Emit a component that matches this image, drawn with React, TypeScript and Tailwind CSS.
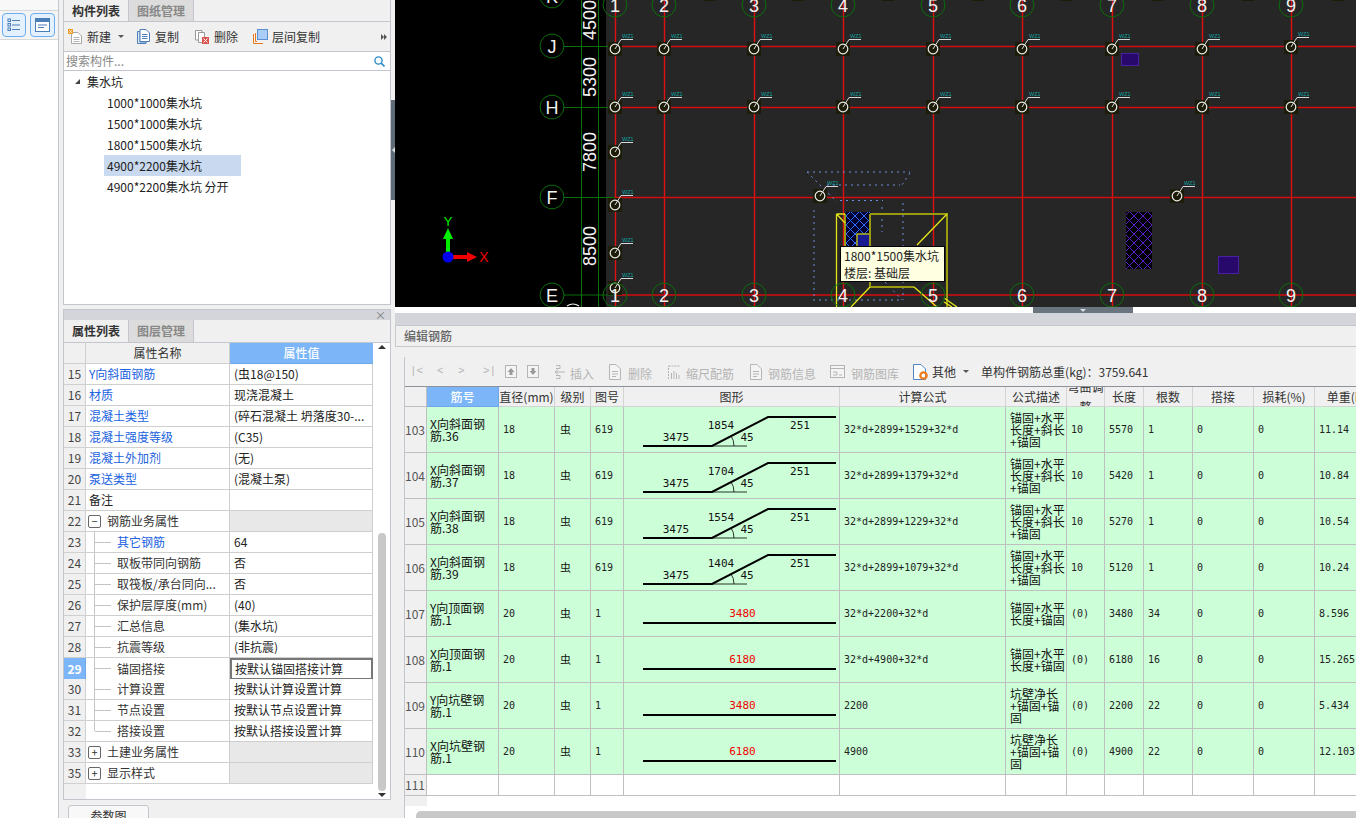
const attrRows = [
  { no: '15', name: 'Y向斜面钢筋', value: '(虫18@150)', blue: true },
  { no: '16', name: '材质', value: '现浇混凝土', blue: true },
  { no: '17', name: '混凝土类型', value: '(碎石混凝土 坍落度30-...', blue: true },
  { no: '18', name: '混凝土强度等级', value: '(C35)', blue: true },
  { no: '19', name: '混凝土外加剂', value: '(无)', blue: true },
  { no: '20', name: '泵送类型', value: '(混凝土泵)', blue: true },
  { no: '21', name: '备注', value: '' },
  { no: '22', name: '钢筋业务属性', value: '', group: '-' },
  { no: '23', name: '其它钢筋', value: '64', child: true, blue: true },
  { no: '24', name: '取板带同向钢筋', value: '否', child: true },
  { no: '25', name: '取筏板/承台同向...', value: '否', child: true },
  { no: '26', name: '保护层厚度(mm)', value: '(40)', child: true },
  { no: '27', name: '汇总信息', value: '(集水坑)', child: true },
  { no: '28', name: '抗震等级', value: '(非抗震)', child: true },
  { no: '29', name: '锚固搭接', value: '按默认锚固搭接计算', child: true, active: true },
  { no: '30', name: '计算设置', value: '按默认计算设置计算', child: true },
  { no: '31', name: '节点设置', value: '按默认节点设置计算', child: true },
  { no: '32', name: '搭接设置', value: '按默认搭接设置计算', child: true, last: true },
  { no: '33', name: '土建业务属性', value: '', group: '+' },
  { no: '35', name: '显示样式', value: '', group: '+' },
]

const rebarRows = [
  { no: 103, name: ['X向斜面钢', '筋.36'], d: '18', fig: '619', a: '3475', b: '1854', c: '251', formula: '32*d+2899+1529+32*d', desc: ['锚固+水平', '长度+斜长', '+锚固'], bend: '10', len: '5570', count: '1', weight: '11.14' },
  { no: 104, name: ['X向斜面钢', '筋.37'], d: '18', fig: '619', a: '3475', b: '1704', c: '251', formula: '32*d+2899+1379+32*d', desc: ['锚固+水平', '长度+斜长', '+锚固'], bend: '10', len: '5420', count: '1', weight: '10.84' },
  { no: 105, name: ['X向斜面钢', '筋.38'], d: '18', fig: '619', a: '3475', b: '1554', c: '251', formula: '32*d+2899+1229+32*d', desc: ['锚固+水平', '长度+斜长', '+锚固'], bend: '10', len: '5270', count: '1', weight: '10.54' },
  { no: 106, name: ['X向斜面钢', '筋.39'], d: '18', fig: '619', a: '3475', b: '1404', c: '251', formula: '32*d+2899+1079+32*d', desc: ['锚固+水平', '长度+斜长', '+锚固'], bend: '10', len: '5120', count: '1', weight: '10.24' },
  { no: 107, name: ['Y向顶面钢', '筋.1'], d: '20', fig: '1', a: '3480', formula: '32*d+2200+32*d', desc: ['锚固+水平', '长度+锚固'], bend: '(0)', len: '3480', count: '34', weight: '8.596' },
  { no: 108, name: ['X向顶面钢', '筋.1'], d: '20', fig: '1', a: '6180', formula: '32*d+4900+32*d', desc: ['锚固+水平', '长度+锚固'], bend: '(0)', len: '6180', count: '16', weight: '15.265' },
  { no: 109, name: ['Y向坑壁钢', '筋.1'], d: '20', fig: '1', a: '3480', formula: '2200', desc: ['坑壁净长', '+锚固+锚', '固'], bend: '(0)', len: '2200', count: '22', weight: '5.434' },
  { no: 110, name: ['X向坑壁钢', '筋.1'], d: '20', fig: '1', a: '6180', formula: '4900', desc: ['坑壁净长', '+锚固+锚', '固'], bend: '(0)', len: '4900', count: '22', weight: '12.103' },
]

const headers = ['筋号', '直径(mm)', '级别', '图号', '图形', '计算公式', '公式描述', '弯曲调整', '长度', '根数', '搭接', '损耗(%)', '单重(kg)']

const gridCols = 'grid grid-cols-[22px_72px_56px_36px_33px_216px_166px_61px_38px_39px_49px_61px_61px_70px]'
const cellCls = 'border-r border-b border-[#bfbfbf] overflow-hidden'
const monoCls = "font-['DejaVu_Sans_Mono'] text-[10px] text-[#222] flex items-center pl-1 whitespace-nowrap"

const axisX = [615, 664, 754, 843, 933, 1022, 1112, 1202, 1291]
const colMarks = [
  ...axisX.map((x, i) => ({ x, y: i === 8 ? 47 : 49 })),
  ...axisX.map((x) => ({ x, y: 107 })),
  { x: 615, y: 152 },
  { x: 615, y: 205 },
  { x: 615, y: 253 },
  { x: 615, y: 288 },
  { x: 820, y: 196 },
  { x: 1177, y: 196 },
]

const ring = (cx: number, cy: number, r: number) =>
  Array.from({ length: 14 }, (_, i) => {
    const a = (i * Math.PI * 2) / 14
    return `${(cx + r * Math.cos(a)).toFixed(1)},${(cy + r * Math.sin(a)).toFixed(1)}`
  }).join(' ')

const AxisBubble = ({ x, y, label }: { x: number; y: number; label: string }) => (
  <g>
    <polygon points={ring(x, y, 12)} fill="none" stroke="#0b6f0b" strokeWidth="1" />
    <text x={x} y={y + 6.5} textAnchor="middle" fontSize="18" fill="#f2f2f2" fontFamily="Liberation Sans, sans-serif">
      {label}
    </text>
  </g>
)

const CadView = () => (
  <svg viewBox="395 0 961 307" className="block h-[307px] w-[961px]">
    <defs>
      <pattern id="hatchBlue" width="9" height="9" patternUnits="userSpaceOnUse">
        <rect width="9" height="9" fill="#000030" />
        <path d="M0 0L9 9M9 0L0 9" stroke="#2a6cff" strokeWidth="1" />
      </pattern>
      <pattern id="hatchPurple" width="9" height="9" patternUnits="userSpaceOnUse">
        <rect width="9" height="9" fill="#000" />
        <path d="M0 0L9 9M9 0L0 9" stroke="#5a1ec8" strokeWidth="1" />
      </pattern>
    </defs>
    <rect x="395" y="0" width="961" height="307" fill="#000" />
    <rect x="606" y="0" width="750" height="307" fill="#262626" />

    {/* dimension lines */}
    <path d="M581.5 0V307M598.5 0V307" stroke="#0b6f0b" strokeWidth="1" />
    {[46.5, 107.5, 197.5, 295].map((y) => (
      <path key={y} d={`M564 ${y}H615`} stroke="#0b6f0b" strokeWidth="1" />
    ))}
    {[
      { t: '4500', y: 20 },
      { t: '5300', y: 77 },
      { t: '7800', y: 152 },
      { t: '8500', y: 246 },
    ].map((d) => (
      <text
        key={d.t}
        x={0}
        y={0}
        transform={`translate(596 ${d.y}) rotate(-90)`}
        textAnchor="middle"
        fontSize="18"
        fill="#f2f2f2"
        fontFamily="Liberation Sans, sans-serif"
      >
        {d.t}
      </text>
    ))}

    {/* red grid */}
    {axisX.map((x) => (
      <path key={x} d={`M${x + 0.5} 0V307`} stroke="#e01010" strokeWidth="1.4" />
    ))}
    {[46.5, 107.5, 197.5, 295].map((y) => (
      <path key={y} d={`M615 ${y}H1356`} stroke="#d40d0d" strokeWidth="1.4" />
    ))}

    {/* top stubs */}
    {[709, 798, 888, 978, 1067, 1157, 1248, 1338].map((x) => (
      <rect key={x} x={x - 6} y="0" width="12" height="1" fill="#1c1c08" />
    ))}

    {/* pit outlines */}
    <path
      d="M807 172H910M827 185H900M840 200.5H883M814 210V300M882 207V232M903 203V300M813 300H903M807 172L837 202M910 173L902 185M885 282L902 300"
      stroke="#6f8fe0"
      strokeWidth="1"
      strokeDasharray="2 4"
      fill="none"
    />
    <rect x="846" y="212" width="25" height="36" fill="url(#hatchBlue)" />
    <rect x="857" y="234" width="13" height="14" fill="#1a1a90" stroke="#b5b516" strokeWidth="1.5" />
    <path d="M870 214H947V307M870 214V287H914M845 214V246" fill="none" stroke="#9a9a10" strokeWidth="2" />
    <path d="M836.5 214H845M836.5 214V307M836.5 214L845 223M947 214L917 245M914 287L937 307M870 287L851 307M944 298L957 307M944 302L952 307" fill="none" stroke="#e6e61a" strokeWidth="1.3" />

    {/* right hand pits */}
    <rect x="1121.5" y="53.5" width="17" height="12" fill="#26096b" stroke="#4a1fa0" />
    <rect x="1218.5" y="256.5" width="20" height="17" fill="#26096b" stroke="#4a1fa0" />
    <rect x="1126" y="212" width="26" height="57" fill="url(#hatchPurple)" />

    {/* column marks */}
    {colMarks.map((m, i) => (
      <g key={i}>
        <rect x={m.x - 7} y={m.y - 7} width="14" height="14" fill="#1c1c08" />
        <circle cx={m.x} cy={m.y} r="4.8" fill="none" stroke="#eeeeee" strokeWidth="1.2" />
        <path d={`M${m.x} ${m.y}L${m.x + 6} ${m.y - 9.5}H${m.x + 18}`} fill="none" stroke="#d8d8d8" strokeWidth="1" />
        <text x={m.x + 7} y={m.y - 11} fontSize="5.5" fill="#0ea5a5" fontFamily="Liberation Sans, sans-serif">
          WZ1
        </text>
      </g>
    ))}

    {/* axis bubbles */}
    <AxisBubble x={552} y={-4} label="K" />
    <AxisBubble x={552} y={46} label="J" />
    <AxisBubble x={552} y={107} label="H" />
    <AxisBubble x={552} y={197} label="F" />
    <AxisBubble x={552} y={295} label="E" />
    {axisX.map((x, i) => (
      <g key={x}>
        <AxisBubble x={x} y={5} label={String(i + 1)} />
        <AxisBubble x={x} y={295} label={String(i + 1)} />
      </g>
    ))}
    <path d="M567 306Q573 302 579 306" fill="none" stroke="#f2f2f2" strokeWidth="1.2" />

    {/* ucs */}
    <path d="M446 257V239H443L448 228L453 239H450V257Z" fill="#00f000" />
    <path d="M448 255H467V252L477 257L467 262V259H448Z" fill="#f00000" />
    <circle cx="448" cy="257" r="5.5" fill="#0000f0" />
    <text x="448" y="226" textAnchor="middle" fontSize="13" fill="#00f000" fontFamily="Liberation Sans, sans-serif">
      Y
    </text>
    <text x="484" y="262" textAnchor="middle" fontSize="14" fill="#f00000" fontFamily="Liberation Sans, sans-serif">
      X
    </text>
  </svg>
)

const BentBar = ({ a, b, c }: { a: string; b?: string; c?: string }) => (
  <svg viewBox="0 0 215 45" className="block h-[45px] w-[215px]">
    <path d="M19 39H88L144 10H212" fill="none" stroke="#000" strokeWidth="2" />
    <path d="M88 39H123M110 39Q110 33 107 29" fill="none" stroke="#000" strokeWidth="0.8" />
    <g fontSize="11" fill="#111" fontFamily="DejaVu Sans Mono, monospace" textAnchor="middle">
      <text x="52" y="33.5">{a}</text>
      <text x="97" y="22">{b}</text>
      <text x="176" y="22">{c}</text>
      <text x="123" y="33.5">45</text>
    </g>
  </svg>
)

const StraightBar = ({ a }: { a: string }) => (
  <svg viewBox="0 0 215 45" className="block h-[45px] w-[215px]">
    <path d="M19 32H212" fill="none" stroke="#000" strokeWidth="2" />
    <text x="118.5" y="25.5" fontSize="11" fill="#f00000" fontFamily="DejaVu Sans Mono, monospace" textAnchor="middle">
      {a}
    </text>
  </svg>
)

const IconNew = () => (
  <svg width="15" height="16" viewBox="0 0 15 16" className="shrink-0">
    <path d="M3.5 3.5H10L13.5 7V14.5H3.5Z" fill="#fff" stroke="#a9a9a9" />
    <path d="M5.5 8.5H11.5M5.5 10.5H11.5M5.5 12.5H11.5" stroke="#b5b5b5" />
    <rect x="0" y="0" width="5" height="5" fill="#f59a23" />
    <path d="M1 1L4 4M4 1L1 4" stroke="#fff" strokeWidth="0.7" />
  </svg>
)
const IconCopy = () => (
  <svg width="13" height="15" viewBox="0 0 13 15" className="shrink-0">
    <path d="M0.5 2.5H3V13H9V14.5H0.5Z" fill="#dbe8f8" stroke="#4f7fb8" />
    <path d="M3 0.5H9L12.5 4V12.5H3Z" fill="#fff" stroke="#4f7fb8" />
    <path d="M5 5.5H10.5M5 7.5H10.5M5 9.5H10.5" stroke="#4f7fb8" />
  </svg>
)
const IconDelete = () => (
  <svg width="14" height="15" viewBox="0 0 14 15" className="shrink-0">
    <path d="M0.5 1.5H7V11H0.5Z" fill="#fff" stroke="#9a9a9a" />
    <path d="M3.5 3.5H9.5V13.5H3.5Z" fill="#fff" stroke="#9a9a9a" />
    <rect x="7" y="8" width="7" height="7" fill="#d9534f" />
    <path d="M8.5 9.5L12.5 13.5M12.5 9.5L8.5 13.5" stroke="#fff" />
  </svg>
)
const IconFloorCopy = () => (
  <svg width="15" height="15" viewBox="0 0 15 15" className="shrink-0">
    <path d="M0.5 5V14.5H10M2.5 4V12.5H4" fill="none" stroke="#e8791f" />
    <rect x="4.5" y="0.5" width="10" height="10" fill="#a9cdf6" stroke="#5a8fd0" />
  </svg>
)
const Caret = ({ tone = '#555' }: { tone?: string }) => (
  <svg width="6" height="3" viewBox="0 0 6 3" className="shrink-0">
    <path d="M0 0H6L3 3Z" fill={tone} />
  </svg>
)

const Grey = '#b5b5b5'
const GreyDoc = () => (
  <svg width="14" height="16" viewBox="0 0 14 16" className="shrink-0">
    <path d="M1.5 0.5H8L12.5 5V15.5H1.5Z" fill="#f4f4f4" stroke={Grey} />
    <path d="M4 7.5H10M4 10H10M4 12.5H8" stroke={Grey} />
  </svg>
)

const ToolText = ({ children }: { children: React.ReactNode }) => (
  <span className="whitespace-nowrap text-[12px] text-[#b4b4b4]">{children}</span>
)

const EditToolbar = () => (
  <div className="flex h-[29px] items-center bg-[#f0f0f0]">
    <span className="ml-[5px] w-[27px] font-['Liberation_Mono'] text-[11px] text-[#b4b4b4]">|&lt;</span>
    <span className="w-[21px] font-['Liberation_Mono'] text-[11px] text-[#b4b4b4]">&lt;</span>
    <span className="w-[25px] font-['Liberation_Mono'] text-[11px] text-[#b4b4b4]">&gt;</span>
    <span className="w-[22px] font-['Liberation_Mono'] text-[11px] text-[#b4b4b4]">&gt;|</span>
    <svg width="12" height="13" viewBox="0 0 12 13" className="shrink-0">
      <rect x="0.5" y="0.5" width="11" height="12" fill="#f4f4f4" stroke={Grey} />
      <path d="M6 3L9.5 7H7.5V10H4.5V7H2.5Z" fill="#9a9a9a" />
    </svg>
    <svg width="12" height="13" viewBox="0 0 12 13" className="ml-[10px] shrink-0">
      <rect x="0.5" y="0.5" width="11" height="12" fill="#f4f4f4" stroke={Grey} />
      <path d="M6 10L9.5 6H7.5V3H4.5V6H2.5Z" fill="#9a9a9a" />
    </svg>
    <svg width="13" height="16" viewBox="0 0 13 16" className="ml-[13px] shrink-0">
      <path d="M4 1.5H8V4.5H4M4 11.5H8V14.5H4M13 8H4M6 5.5L3 8L6 10.5" fill="none" stroke={Grey} />
    </svg>
    <span className="ml-[5px]"><ToolText>插入</ToolText></span>
    <span className="ml-[14px]"><GreyDoc /></span>
    <span className="ml-[6px]"><ToolText>删除</ToolText></span>
    <svg width="12" height="14" viewBox="0 0 12 14" className="ml-[16px] shrink-0">
      <path d="M0.5 14V1M0.5 1H12" fill="none" stroke={Grey} strokeDasharray="2 1" />
      <path d="M3.5 14V8M6 14V6M8.5 14V8M11 14V10" stroke={Grey} />
    </svg>
    <span className="ml-[6px]"><ToolText>缩尺配筋</ToolText></span>
    <span className="ml-[15px]"><GreyDoc /></span>
    <span className="ml-[5px]"><ToolText>钢筋信息</ToolText></span>
    <svg width="15" height="13" viewBox="0 0 15 13" className="ml-[14px] shrink-0">
      <rect x="0.5" y="0.5" width="14" height="12" fill="#f4f4f4" stroke={Grey} />
      <path d="M0.5 3.5H14.5M3 7H7V10H3M9 10H12" fill="none" stroke={Grey} />
    </svg>
    <span className="ml-[6px]"><ToolText>钢筋图库</ToolText></span>
    <svg width="15" height="16" viewBox="0 0 15 16" className="ml-[14px] shrink-0">
      <path d="M0.5 0.5H8L12.5 5V15.5H0.5Z" fill="#fff" stroke="#4f86c6" />
      <circle cx="10.5" cy="11.5" r="3.2" fill="none" stroke="#ee7a1a" strokeWidth="2.2" />
    </svg>
    <span className="ml-[4px] whitespace-nowrap text-[12px] text-[#333]">其他</span>
    <span className="ml-[7px]"><Caret /></span>
    <span className="ml-[12px] whitespace-nowrap text-[12px] text-[#333]">单构件钢筋总重(kg)：3759.641</span>
  </div>
)

const RebarTable = () => (
  <div className="h-[432px] overflow-hidden bg-white">
    <div className={`${gridCols} h-[21px] w-[974px] border-t border-[#8d9199] bg-[#f0f0f0] text-[12px] text-[#333]`}>
      <div className={cellCls} />
      {headers.map((h, i) => (
        <div
          key={h}
          className={
            i === 0
              ? 'flex items-center justify-center border-b border-r border-[#6fa8ea] bg-[#7cb6f8] font-medium text-white'
              : 'flex h-[20px] items-center justify-center overflow-hidden border-b border-r border-[#d4d4d4] text-center leading-[20px]'
          }
        >
          <span className={i === 12 ? 'whitespace-nowrap' : ''}>{h}</span>
        </div>
      ))}
    </div>
    {rebarRows.map((r) => (
      <div key={r.no} className={`${gridCols} h-[46px] w-[974px] bg-[#ccffd8]`}>
        <div className={`${cellCls} flex items-center bg-[#f0f0f0] text-[12px] text-[#555]`}>{r.no}</div>
        <div className={`${cellCls} flex flex-col justify-center pl-[3px] text-[12px] leading-[12px] text-[#111]`}>
          {r.name.map((l) => (
            <span key={l} className="whitespace-nowrap">{l}</span>
          ))}
        </div>
        <div className={`${cellCls} ${monoCls}`}>{r.d}</div>
        <div className={`${cellCls} flex items-center pl-[5px] text-[11px] text-[#111]`}>虫</div>
        <div className={`${cellCls} ${monoCls}`}>{r.fig}</div>
        <div className={cellCls}>
          {r.b ? <BentBar a={r.a} b={r.b} c={r.c} /> : <StraightBar a={r.a} />}
        </div>
        <div className={`${cellCls} ${monoCls}`}>{r.formula}</div>
        <div className={`${cellCls} flex flex-col justify-center pl-1 text-[12px] leading-[12px] text-[#111]`}>
          {r.desc.map((l) => (
            <span key={l} className="whitespace-nowrap">{l}</span>
          ))}
        </div>
        <div className={`${cellCls} ${monoCls}`}>{r.bend}</div>
        <div className={`${cellCls} ${monoCls}`}>{r.len}</div>
        <div className={`${cellCls} ${monoCls}`}>{r.count}</div>
        <div className={`${cellCls} ${monoCls}`}>0</div>
        <div className={`${cellCls} ${monoCls}`}>0</div>
        <div className={`${cellCls} ${monoCls}`}>{r.weight}</div>
      </div>
    ))}
    <div className={`${gridCols} h-[21px] w-[974px]`}>
      <div className={`${cellCls} flex items-center bg-[#f0f0f0] text-[12px] text-[#555]`}>111</div>
      {headers.map((h) => (
        <div key={h} className={cellCls} />
      ))}
    </div>
    <div className="h-[10px] w-[22px] bg-[#f0f0f0]" />
    <div className="ml-[11px] mt-[5px] h-[12px] rounded-l-[5px] bg-[#c8c8c8]" />
  </div>
)

const AttrRow = ({ row }: { row: (typeof attrRows)[number] }) => (
  <div className="grid h-[21px] grid-cols-[22px_144px_143px] text-[12px]">
    <div
      className={
        row.active
          ? 'flex items-center justify-center border-b border-r border-[#6fa8ea] bg-[#7cb6f8] font-bold text-white'
          : 'flex items-center justify-center border-b border-r border-[#d0d0d0] bg-[#f0f0f0] text-[#444]'
      }
    >
      {row.no}
    </div>
    <div className="flex items-stretch overflow-hidden whitespace-nowrap border-b border-r border-[#cfcfcf] bg-white">
      {row.group ? (
        <div className="flex items-center pl-[2px] text-[#333]">
          <span className="flex h-[13px] w-[13px] items-center justify-center rounded-[2px] border border-[#666] text-[11px] leading-none">
            {row.group === '-' ? '−' : '+'}
          </span>
          <span className="ml-[6px]">{row.name}</span>
        </div>
      ) : row.child ? (
        <div className="flex items-center pl-[8px]">
          <div className={row.last ? 'h-[10px] w-px self-start bg-[#c4c4c4]' : 'w-px self-stretch bg-[#c4c4c4]'} />
          <div className="h-px w-[16px] bg-[#c4c4c4]" />
          <span className={row.blue ? 'ml-[6px] text-[#2062e0]' : 'ml-[6px] text-[#333]'}>{row.name}</span>
        </div>
      ) : (
        <span className={row.blue ? 'flex items-center pl-[3px] text-[#2062e0]' : 'flex items-center pl-[3px] text-[#222]'}>
          {row.name}
        </span>
      )}
    </div>
    <div
      className={
        row.active
          ? 'flex items-center whitespace-nowrap border-2 border-[#777] bg-white pl-[3px] text-[#222]'
          : row.group
            ? 'border-b border-r border-[#cfcfcf] bg-[#e8e8e8]'
            : 'flex items-center whitespace-nowrap border-b border-r border-[#cfcfcf] bg-white pl-1 text-[#222]'
      }
    >
      {row.value}
    </div>
  </div>
)

const ComponentPanel = () => (
  <div className="flex h-[305px] flex-col border border-t-0 border-[#c3c6cd] bg-white">
    <div className="flex h-[22px] shrink-0 border-b border-[#c3c6cd] bg-[#f0f0f0] text-[12px] font-bold">
      <div className="flex w-[65px] items-center justify-center border-r border-[#c3c6cd] text-[#333]">构件列表</div>
      <div className="flex w-[65px] items-center justify-center border-r border-[#c3c6cd] bg-[#dcdcdc] text-[#888]">图纸管理</div>
    </div>
    <div className="flex h-[30px] shrink-0 items-center border-b border-[#c3c6cd] bg-[#f0f0f0] text-[12px] text-[#333]">
      <span className="ml-[4px]"><IconNew /></span>
      <span className="ml-[4px]">新建</span>
      <span className="ml-[7px]"><Caret /></span>
      <span className="ml-[13px]"><IconCopy /></span>
      <span className="ml-[5px]">复制</span>
      <span className="ml-[16px]"><IconDelete /></span>
      <span className="ml-[5px]">删除</span>
      <span className="ml-[15px]"><IconFloorCopy /></span>
      <span className="ml-[4px]">层间复制</span>
      <svg width="6" height="6" viewBox="0 0 6 6" className="ml-auto mr-[3px]">
        <path d="M0 0L3 3L0 6ZM3 0L6 3L3 6Z" fill="#555" />
      </svg>
    </div>
    <div className="flex h-[19px] shrink-0 items-center justify-between border-b border-[#c3c6cd] pl-[2px] pr-[5px] text-[12px] text-[#888]">
      <span>搜索构件...</span>
      <svg width="11" height="11" viewBox="0 0 11 11">
        <circle cx="4.5" cy="4.5" r="3.6" fill="none" stroke="#2a8ac8" strokeWidth="1.4" />
        <path d="M7 7L10.5 10.5" stroke="#2a8ac8" strokeWidth="1.6" />
      </svg>
    </div>
    <div className="text-[12px] text-[#222]">
      <div className="flex h-[21px] items-center">
        <svg width="5" height="5" viewBox="0 0 5 5" className="ml-[11px]">
          <path d="M5 0V5H0Z" fill="#444" />
        </svg>
        <span className="ml-[7px]">集水坑</span>
      </div>
      {['1000*1000集水坑', '1500*1000集水坑', '1800*1500集水坑', '4900*2200集水坑', '4900*2200集水坑 分开'].map((t, i) => (
        <div
          key={t}
          className={
            i === 3
              ? 'ml-[40px] flex h-[21px] w-[137px] items-center bg-[#c9d9ef] pl-[3px]'
              : 'ml-[40px] flex h-[21px] items-center pl-[3px]'
          }
        >
          {t}
        </div>
      ))}
    </div>
  </div>
)

const AttributePanel = () => (
  <div className="mt-[4px] flex h-[491px] flex-col border border-[#c3c6cd] bg-white">
    <div className="flex h-[10px] shrink-0 items-center justify-end bg-[#d3d5da] pr-[4px] text-[11px] leading-none text-[#777]">×</div>
    <div className="flex h-[23px] shrink-0 border-b border-[#c3c6cd] bg-[#f0f0f0] text-[12px] font-bold">
      <div className="flex w-[65px] items-center justify-center border-r border-[#c3c6cd] text-[#333]">属性列表</div>
      <div className="flex w-[65px] items-center justify-center border-r border-[#c3c6cd] bg-[#dcdcdc] text-[#888]">图层管理</div>
    </div>
    <div className="flex min-h-0 flex-1">
      <div className="flex w-[309px] flex-col">
        <div className="grid h-[21px] shrink-0 grid-cols-[22px_144px_143px] text-[12px]">
          <div className="border-b border-r border-[#d0d0d0] bg-[#f0f0f0]" />
          <div className="flex items-center justify-center border-b border-r border-[#d0d0d0] bg-[#f0f0f0] text-[#333]">属性名称</div>
          <div className="flex items-center justify-center border-b border-[#6fa8ea] bg-[#7cb6f8] font-medium text-white">属性值</div>
        </div>
        {attrRows.map((row) => (
          <AttrRow key={row.no} row={row} />
        ))}
        <div className="w-[22px] flex-1 bg-[#f0f0f0]" />
      </div>
      <div className="flex w-[17px] flex-col items-center pt-[1px]">
        <svg width="8" height="4" viewBox="0 0 8 4" className="mt-[1px]">
          <path d="M0 4H8L4 0Z" fill="#333" />
        </svg>
        <div className="mt-[184px] h-[258px] w-[8px] rounded-[4px] bg-[#c8c8c8]" />
        <svg width="8" height="4" viewBox="0 0 8 4" className="mt-[2px]">
          <path d="M0 0H8L4 4Z" fill="#333" />
        </svg>
      </div>
    </div>
  </div>
)

export default function App() {
  return (
    <div className="flex h-[818px] w-[1356px] overflow-hidden bg-white font-['Noto_Sans_CJK_SC','Noto_Sans',sans-serif]">
      <aside className="w-[59px] shrink-0 border-r border-[#c3c6cd] bg-white">
        <div className="h-[11px] border-b border-[#d6d8dc] bg-[#f8f8f8]" />
        <div className="flex h-[29px] items-center gap-[4px] border-b border-[#d6d8dc] bg-[#f4f4f4] pl-[2px]">
          <div className="flex h-[24px] w-[24px] items-center justify-center rounded-[4px] border border-[#6aaef0] bg-[#e4f0fc]">
            <svg width="14" height="14" viewBox="0 0 14 14">
              <path d="M5 2.5H13M5 7H13M5 11.5H13" stroke="#4a7fb8" />
              <rect x="1" y="1" width="2.5" height="2.5" fill="none" stroke="#4a7fb8" />
              <rect x="1" y="5.5" width="2.5" height="2.5" fill="none" stroke="#4a7fb8" />
              <rect x="1" y="10" width="2.5" height="2.5" fill="none" stroke="#4a7fb8" />
            </svg>
          </div>
          <div className="flex h-[24px] w-[25px] items-center justify-center rounded-[4px] border border-[#6aaef0] bg-[#e4f0fc]">
            <svg width="15" height="14" viewBox="0 0 15 14">
              <rect x="0.5" y="0.5" width="14" height="13" fill="#fff" stroke="#4a7fb8" />
              <rect x="0.5" y="0.5" width="14" height="3.5" fill="#4a7fb8" />
              <path d="M3 7H12M3 9.5H9" stroke="#4a7fb8" />
            </svg>
          </div>
        </div>
      </aside>

      <div className="flex w-[336px] shrink-0 bg-[#f0f0f0]">
        <div className="ml-[4px] w-[328px] shrink-0">
          <ComponentPanel />
          <AttributePanel />
          <div className="ml-[5px] mt-[5px] flex h-[22px] w-[81px] items-center justify-center rounded-t-[3px] border border-[#c3c6cd] bg-[#f8f8f8] text-[12px] text-[#333]">
            参数图
          </div>
        </div>
        <div className="flex w-[4px] shrink-0 flex-col">
          <div className="mt-[100px] flex h-[100px] items-center justify-center bg-[#5f6b76]">
            <svg width="3" height="6" viewBox="0 0 3 6">
              <path d="M3 0V6L0 3Z" fill="#d8dbe0" />
            </svg>
          </div>
        </div>
      </div>

      <main className="w-[961px] shrink-0 bg-[#f0f0f0]">
        <div className="relative h-[307px]">
          <CadView />
          <div className="absolute left-[445px] top-[246px] h-[36px] w-[105px] border border-black bg-[#ffffe1] pl-[3px] text-[12px] leading-[17px] text-[#222]">
            <div>1800*1500集水坑</div>
            <div>楼层: 基础层</div>
          </div>
        </div>
        <div className="h-[6px] bg-white pl-[638px]">
          <div className="flex h-[6px] w-[100px] justify-center bg-[#6a7580]">
            <svg width="6" height="3" viewBox="0 0 6 3" className="mt-[2px]">
              <path d="M0 0H6L3 3Z" fill="#d8dbe0" />
            </svg>
          </div>
        </div>
        <div className="h-[13px] border-b border-[#c3c6cd] bg-[#d3d5da]" />
        <div className="flex h-[21px] items-center border-b border-l border-[#c8c8c8] bg-[#f0f0f0] pl-[8px] text-[12px] font-medium text-[#666]">
          编辑钢筋
        </div>
        <div className="ml-[9px] h-[10px]" />
        <div className="ml-[9px] border-l border-[#c3c6cd]">
          <EditToolbar />
          <RebarTable />
        </div>
      </main>
    </div>
  )
}
